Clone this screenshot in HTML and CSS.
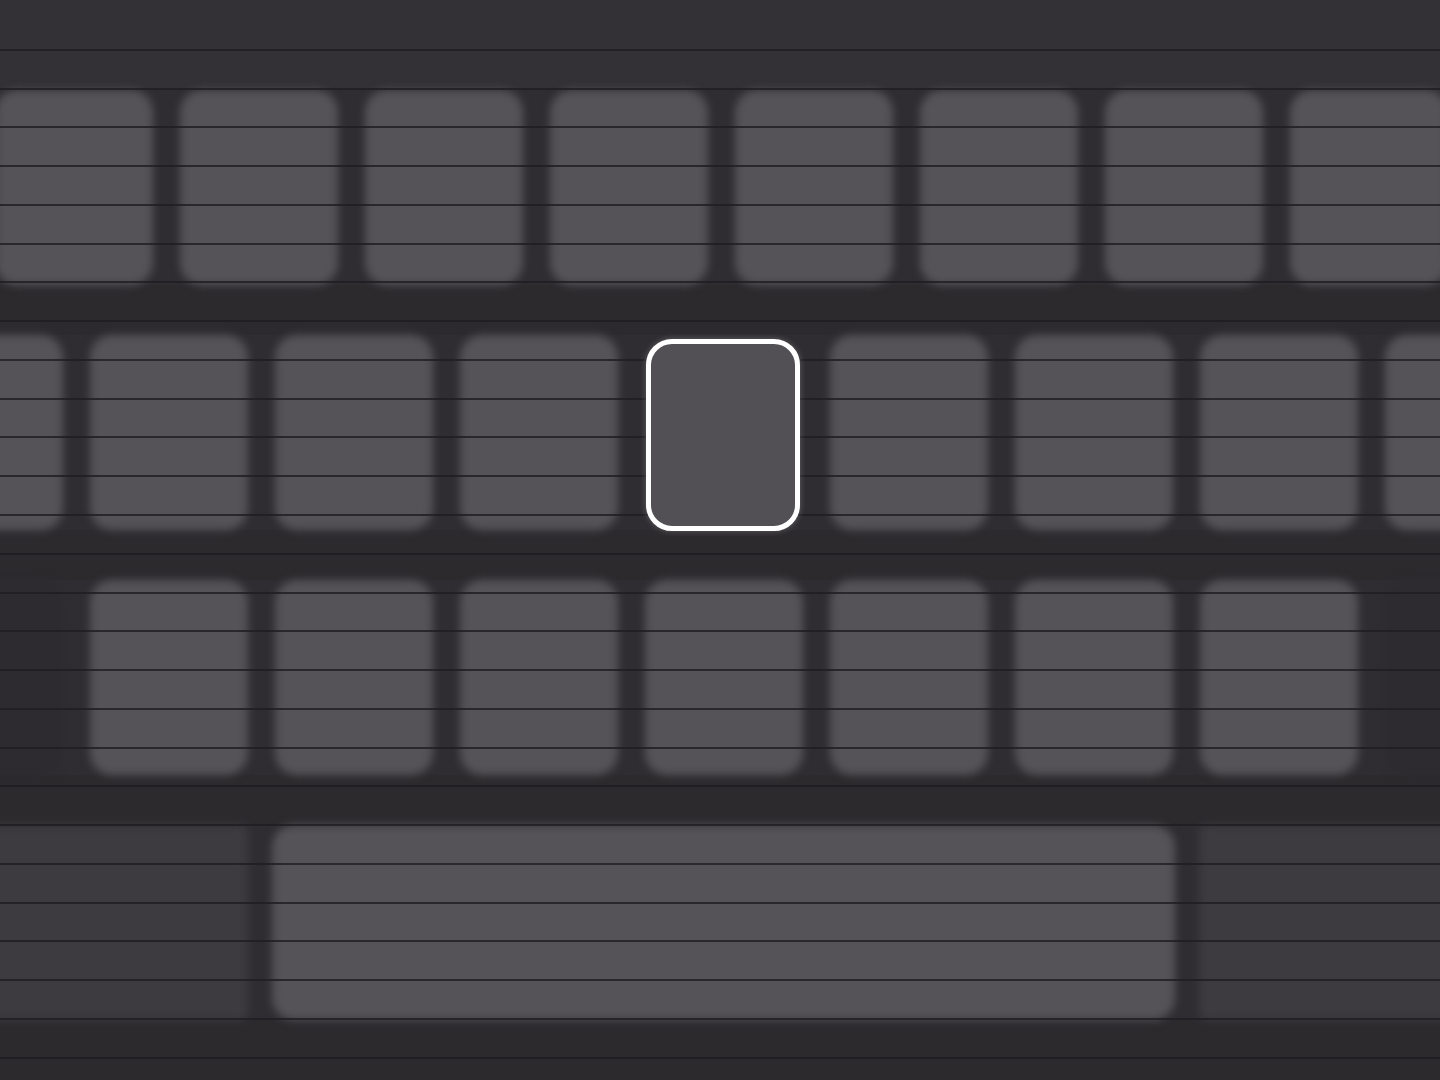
FILE: index.html
```html
<!DOCTYPE html>
<html lang="en">
<head>
<meta charset="utf-8">
<title>Keyboard</title>
<link rel="stylesheet" href="styles.css">
</head>
<body>
<div class="scene">
  <div class="topbar"></div>
  <div class="row row-1">
    <div class="key"></div><div class="key"></div><div class="key"></div><div class="key"></div>
    <div class="key"></div><div class="key"></div><div class="key"></div><div class="key"></div>
  </div>
  <div class="row row-2">
    <div class="key"></div><div class="key"></div><div class="key"></div><div class="key"></div>
    <div class="key-focus"></div>
    <div class="key"></div><div class="key"></div><div class="key"></div><div class="key"></div>
  </div>
  <div class="row row-3">
    <div class="key key-dark"></div>
    <div class="key"></div><div class="key"></div><div class="key"></div><div class="key"></div>
    <div class="key"></div><div class="key"></div><div class="key"></div>
    <div class="key key-dark"></div>
  </div>
  <div class="row row-4">
    <div class="key key-mod key-left"></div>
    <div class="key key-space"></div>
    <div class="key key-mod key-right"></div>
  </div>
  <div class="scanlines"></div>
</div>
</body>
</html>
```
FILE: styles.css
```css
html, body {
  margin: 0;
  padding: 0;
  background: #2c2a2e;
}
.scene {
  position: relative;
  width: 1440px;
  height: 1080px;
  overflow: hidden;
  background: #2c2a2d;
}
.topbar {
  height: 90px;
  background: #333135;
}
.row {
  display: flex;
  gap: 27px;
  height: 195px;
  margin-bottom: 50px;
  background: #2f2d31;
}
.row-1 { margin-left: -5px; }
.row-2 { margin-left: -95px; }
.row-3 { margin-left: -95px; }
.row-4 { margin-left: -50px; gap: 24px; }
.key {
  flex: none;
  width: 158px;
  height: 195px;
  border-radius: 22px;
  background: #555357;
  filter: blur(4px);
}
.key-dark {
  background: #2d2b2f;
}
.key-mod {
  background: #3d3b3f;
  border-radius: 8px;
}
.key-left { width: 298px; }
.key-space { width: 903px; }
.key-right { width: 400px; }
.key-focus {
  position: relative;
  z-index: 2;
  flex: none;
  box-sizing: border-box;
  width: 154px;
  height: 192px;
  margin: 4px 3px 0 1px;
  border: 5px solid #ffffff;
  border-radius: 26px;
  background: #535055;
  box-shadow: 0 0 6px rgba(255, 255, 255, 0.25);
}
.scanlines {
  position: absolute;
  inset: 0;
  z-index: 1;
  pointer-events: none;
  background-image: repeating-linear-gradient(
    to bottom,
    transparent 0,
    transparent 36.77px,
    rgba(30, 28, 32, 0.8) 36.77px,
    rgba(30, 28, 32, 0.8) 38.77px
  );
  background-position: 0 12px;
}
```
